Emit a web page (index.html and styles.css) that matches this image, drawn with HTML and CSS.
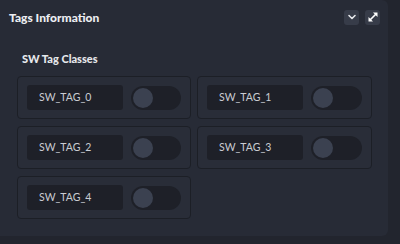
FILE: index.html
```html
<!DOCTYPE html>
<html lang="en">
<head>
    <meta charset="UTF-8">
    <title>Tags Information</title>
    <link rel="stylesheet" href="styles.css">
</head>
<body>
    <div class="panel">
        <div class="panel-header">
            <h2>Tags Information</h2>
            <div class="tools">
                <button class="tool">
                    <svg width="10" height="10" viewBox="0 0 10 10"><path d="M2 3.5 L5 6.5 L8 3.5" fill="none" stroke="#e6e8ec" stroke-width="1.6" stroke-linecap="round" stroke-linejoin="round"/></svg>
                </button>
                <button class="tool">
                    <svg width="12" height="12" viewBox="0 0 12 12">
                        <path d="M3 9 L9 3" stroke="#ffffff" stroke-width="1.6" stroke-linecap="round"/>
                        <path d="M6 1.5 H10.5 V6 Z" fill="#ffffff"/>
                        <path d="M1.5 6 V10.5 H6 Z" fill="#ffffff"/>
                    </svg>
                </button>
            </div>
        </div>
        <div class="section">
            <h3>SW Tag Classes</h3>
            <div class="tag-grid">
                <div class="tag-card"><span class="tag-name">SW_TAG_0</span><span class="toggle"><span class="knob"></span></span></div>
                <div class="tag-card"><span class="tag-name">SW_TAG_1</span><span class="toggle"><span class="knob"></span></span></div>
                <div class="tag-card"><span class="tag-name">SW_TAG_2</span><span class="toggle"><span class="knob"></span></span></div>
                <div class="tag-card"><span class="tag-name">SW_TAG_3</span><span class="toggle"><span class="knob"></span></span></div>
                <div class="tag-card"><span class="tag-name">SW_TAG_4</span><span class="toggle"><span class="knob"></span></span></div>
            </div>
        </div>
    </div>
</body>
</html>
```

FILE: styles.css
```css
body {
    margin: 0;
    background: #22252e;
    font-family: Lato, "Noto Sans", sans-serif;
    width: 400px;
    height: 244px;
    overflow: hidden;
}
.panel {
    width: 388px;
    height: 236px;
    box-sizing: border-box;
    background: #272b36;
    border-radius: 0 6px 6px 0;
}
.panel-header {
    display: flex;
    align-items: center;
    justify-content: space-between;
    height: 34px;
    padding: 0 8px 0 9px;
}
.panel-header h2 {
    margin: 0;
    font-size: 12px;
    font-weight: 900;
    color: #eceef2;
}
.tools {
    display: flex;
    gap: 6px;
}
.tool {
    width: 15px;
    height: 15px;
    padding: 0;
    border: none;
    border-radius: 3px;
    background: #373c49;
    display: flex;
    align-items: center;
    justify-content: center;
}
.section {
    padding: 17px 15px 0 17px;
}
.section h3 {
    margin: 0 0 0 5px;
    font-size: 11px;
    font-weight: 900;
    color: #e6e8ec;
    line-height: 16px;
}
.tag-grid {
    display: grid;
    grid-template-columns: 174px 175px;
    column-gap: 6px;
    row-gap: 7px;
    margin-top: 9px;
}
.tag-card {
    display: flex;
    align-items: center;
    gap: 8px;
    height: 43px;
    box-sizing: border-box;
    padding: 0 9px;
    border: 1px solid #1c1f26;
    border-radius: 4px;
    background: #292d38;
}
.tag-name {
    width: 97px;
    height: 25px;
    box-sizing: border-box;
    padding-left: 12px;
    border-radius: 3px;
    background: #1e2028;
    color: #c9ccd3;
    font-size: 10.5px;
    line-height: 25px;
}
.toggle {
    width: 51px;
    height: 24px;
    border-radius: 12px;
    background: #1e2028;
    display: flex;
    align-items: center;
    padding-left: 2px;
    box-sizing: border-box;
}
.knob {
    width: 20px;
    height: 20px;
    border-radius: 50%;
    background: #3b4150;
}
```
